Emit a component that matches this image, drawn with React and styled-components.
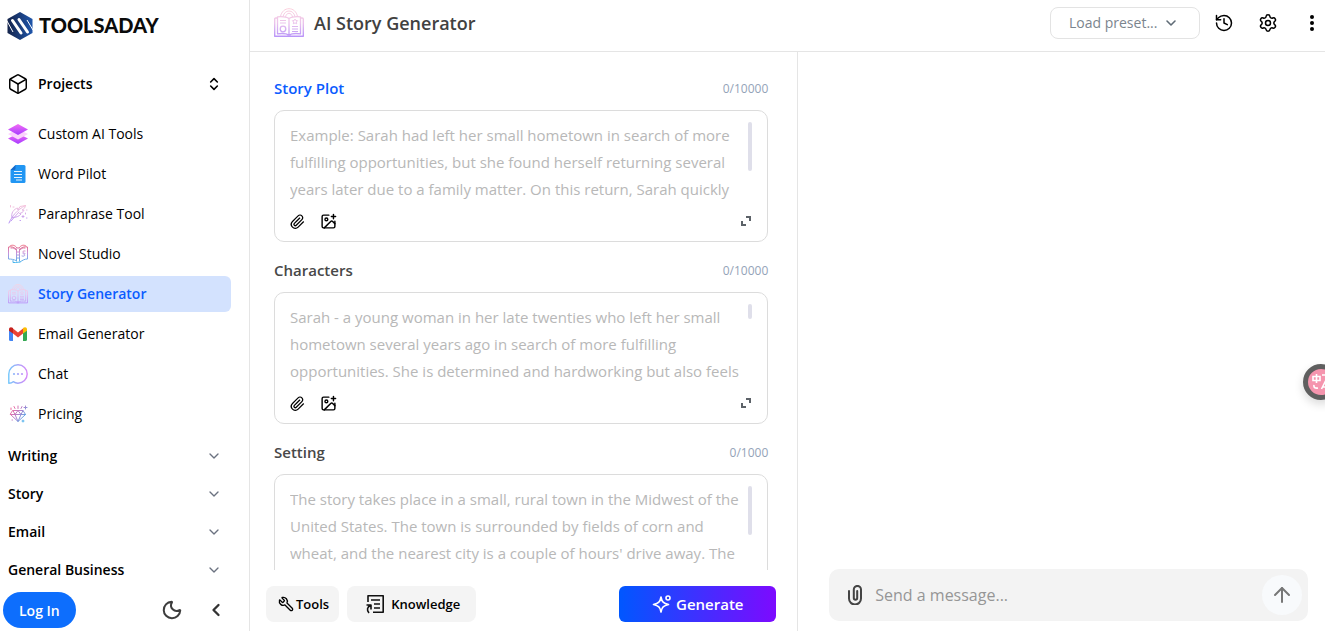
import React, { useState } from "react";
import styled, { createGlobalStyle } from "styled-components";
import {
    Box,
    ChevronsUpDown,
    ChevronDown,
    ChevronLeft,
    History,
    Settings,
    ImagePlus,
    Wrench,
    ArrowUp,
    Moon,
} from "lucide-react";
import { GrAttachment } from "react-icons/gr";

const fields = [
    {
        id: "plot",
        label: "Story Plot",
        max: 10000,
        thumb: 49,
        active: true,
        placeholder:
            "Example: Sarah had left her small hometown in search of more fulfilling opportunities, but she found herself returning several years later due to a family matter. On this return, Sarah quickly",
    },
    {
        id: "characters",
        label: "Characters",
        max: 10000,
        thumb: 15,
        placeholder:
            "Sarah - a young woman in her late twenties who left her small hometown several years ago in search of more fulfilling opportunities. She is determined and hardworking but also feels",
    },
    {
        id: "setting",
        label: "Setting",
        max: 1000,
        thumb: 49,
        placeholder:
            "The story takes place in a small, rural town in the Midwest of the United States. The town is surrounded by fields of corn and wheat, and the nearest city is a couple of hours' drive away. The",
    },
];

const groups = ["Writing", "Story", "Email", "General Business"];

const LogoMark = () => (
    <svg width="26" height="30" viewBox="0 0 26 30" aria-hidden="true">
        <defs>
            <linearGradient id="mark" x1="0" y1="0" x2="1" y2="0">
                <stop offset="0" stopColor="#15244b" />
                <stop offset="1" stopColor="#1f56ab" />
            </linearGradient>
        </defs>
        <path d="M13 1 25.500 8v14L13 29 .5 22V8z" fill="url(#mark)" />
        <g stroke="#fff" strokeWidth="3" strokeLinecap="round" fill="none">
            <path d="M5.500 9.500 14 22" />
            <path d="M12 8.500 20.500 21" />
        </g>
        <path d="M0 10 6 21M20 9l6 10" stroke="#fff" strokeWidth="1" />
    </svg>
);

const LayersIcon = () => (
    <svg width="20" height="20" viewBox="0 0 20 20" aria-hidden="true">
        <defs>
            <linearGradient id="layers" x1="0" y1="0" x2="0" y2="1">
                <stop offset="0" stopColor="#f36cf5" />
                <stop offset="1" stopColor="#a63cff" />
            </linearGradient>
        </defs>
        <path d="M0 14.500 10 9.500l10 5L10 20z" fill="url(#layers)" />
        <path d="M0 10 10 5l10 5-10 5.500z" fill="#fbd3fc" />
        <path d="M0 5.500 10 0l10 5.500L10 11z" fill="url(#layers)" />
    </svg>
);

const DocIcon = () => (
    <svg width="20" height="20" viewBox="0 0 20 20" aria-hidden="true">
        <path d="M7.500 1H16a1.500 1.500 0 0 1 1.500 1.500v15A1.500 1.500 0 0 1 16 19H4a1.500 1.500 0 0 1-1.500-1.500V6z" fill="#2196f3" />
        <path d="M7.500 1v3.500A1.500 1.500 0 0 1 6 6H2.500z" fill="#1769c9" />
        <path d="M6 7.500h8M6 10.500h8M6 13.500h8M8 16h6" stroke="#e3f2fd" strokeWidth="1.200" />
    </svg>
);

const FeatherIcon = () => (
    <svg width="20" height="20" viewBox="0 0 20 20" fill="none" stroke="url(#feather)" strokeLinecap="round" strokeLinejoin="round" aria-hidden="true">
        <defs>
            <linearGradient id="feather" gradientUnits="userSpaceOnUse" x1="0" y1="0" x2="0" y2="20">
                <stop offset="0" stopColor="#fbc8d9" />
                <stop offset="1" stopColor="#b08df6" />
            </linearGradient>
        </defs>
        <path d="M1 19C4 12 9 6 17.500 1.500 17 4 16 5 14 6l2 .3c-1 2-2.500 2.700-4.500 3.200l1.500.5c-2 2.500-5 3.500-8.500 3.500" />
        <path d="M4 14C2.500 9 6 5 9.500 4l.5 2 2-3.500 5.500-1" />
        <path d="M3 17 11 8M15 11.500v2M14 12.500h2M17.500 9v1M2.500 1.500v1.500M5 3h1M18.500 14h.5M12 16.500h.5M18.500 6h.5" />
    </svg>
);

const NovelIcon = () => (
    <svg width="20" height="20" viewBox="0 0 20 20" fill="none" stroke="url(#novel)" strokeLinejoin="round" strokeLinecap="round" aria-hidden="true">
        <defs>
            <linearGradient id="novel" gradientUnits="userSpaceOnUse" x1="0" y1="0" x2="0" y2="20">
                <stop offset="0" stopColor="#f0606f" />
                <stop offset=".45" stopColor="#c792dc" />
                <stop offset="1" stopColor="#35bdf0" />
            </linearGradient>
        </defs>
        <path d="M8 5C6 3 3.500 2.500.5 3v12c3 0 5.500.5 7.500 1.500M12 5c2-2 4.500-2.500 7.500-2v12c-3 0-4.500 1-7.500 3" />
        <path d="M2 2c2-1.500 5-1 7 2h2c2-3 5-3.500 7-2M3 4c2-.5 4 .5 5 2M17 4c-2-.5-4 .5-5 2" />
        <path d="M8.500 5v12M11.500 5v12M8.500 8h3M8.500 11h3M8.500 14h3" />
        <path d="M17 7c-3-.5-3 2 0 2.500M14 12c3 1 4-1.500 1-2.500M5 16.500v2h2.500L12 18" />
    </svg>
);

// shared by the sidebar and the page header, so the gradient id has to differ
const StoryIcon = ({ size, id }) => (
    <svg width={size} height={size} viewBox="0 0 30 30" fill="none" stroke={`url(#${id})`} strokeLinejoin="round" aria-hidden="true">
        <defs>
            <linearGradient id={id} gradientUnits="userSpaceOnUse" x1="0" y1="0" x2="0" y2="30">
                <stop offset="0" stopColor="#fcd0dc" />
                <stop offset=".5" stopColor="#ebc4ec" />
                <stop offset="1" stopColor="#b48ffa" />
            </linearGradient>
        </defs>
        <path d="M6.500 8.500C7.500 3.500 11 .7 15 .7s7.500 2.800 8.500 7.800M9 8.500C10 5 12 3 15 3s5 2 6 5.500M11.500 9c.5-2.300 1.800-3.700 3.500-3.700s3 1.400 3.500 3.700" />
        <path d="M3.500 10H1.700a1 1 0 0 0-1 1v17.300h28.600V11a1 1 0 0 0-1-1h-1.800" strokeWidth="1.400" />
        <path d="M15 10.500C13 8.700 7 8.300 3.500 8.800v17c4-.5 9-.3 11.500 1.200 2.500-1.500 7.500-1.700 11.500-1.200v-17C23 8.300 17 8.700 15 10.500zM15 10.500V27" strokeWidth="1.300" />
        <path d="M6 12.500h6M6 15h6M18 18.500h6M18 21h6M18 23.500h6M13 28.200h4" strokeWidth="1.200" />
        <circle cx="9" cy="21" r="2.800" strokeWidth="1.300" />
        <path d="m21 11 .8 1.500 1.800.2-1.300 1.300.4 1.800-1.700-.9-1.700.9.4-1.800-1.300-1.300 1.800-.2z" />
    </svg>
);

const GmailIcon = () => (
    <svg width="20" height="20" viewBox="0 0 20 20" aria-hidden="true">
        <path d="M1 5v10.500A1.500 1.500 0 0 0 2.500 17H5V8.500z" fill="#4285f4" />
        <path d="M19 5v10.500a1.500 1.500 0 0 1-1.500 1.500H15V8.500z" fill="#34a853" />
        <path d="M5 4.500 10 8.500l5-4v5L10 13.500 5 9.500z" fill="#ea4335" />
        <path d="M1 5.200C1 3 3.300 2.500 5 4v5.500L1 6.700z" fill="#c5221f" />
        <path d="M19 5.200C19 3 16.700 2.500 15 4v5.500l4-2.800z" fill="#fbbc04" />
    </svg>
);

const ChatIcon = () => (
    <svg width="20" height="20" viewBox="0 0 20 20" fill="none" aria-hidden="true">
        <defs>
            <linearGradient id="chat" gradientUnits="userSpaceOnUse" x1="0" y1="0" x2="20" y2="0">
                <stop offset="0" stopColor="#6fc8fb" />
                <stop offset="1" stopColor="#dc84f8" />
            </linearGradient>
        </defs>
        <path d="M.8 19.200V10A9.200 9.200 0 1 1 10 19.200c-2 0-3.500-.6-4.800-1.500-1 1-2.600 1.500-4.400 1.500z" stroke="url(#chat)" strokeWidth="1.400" strokeLinejoin="round" />
        <g fill="url(#chat)">
            <circle cx="6" cy="10" r="1.100" />
            <circle cx="10" cy="10" r="1.100" />
            <circle cx="14" cy="10" r="1.100" />
        </g>
    </svg>
);

const GemIcon = () => (
    <svg width="20" height="20" viewBox="0 0 20 20" fill="none" stroke="url(#gem)" strokeLinejoin="round" strokeLinecap="round" aria-hidden="true">
        <defs>
            <linearGradient id="gem" gradientUnits="userSpaceOnUse" x1="3" y1="5" x2="17" y2="15">
                <stop offset="0" stopColor="#f26a9c" />
                <stop offset=".5" stopColor="#b57fcb" />
                <stop offset="1" stopColor="#4bb4ee" />
            </linearGradient>
        </defs>
        <path d="M5 6.500h10l2.500 4L10 17.500l-7.500-7zM2.500 10.500h15M5 6.500l2 4 3 7 3-7 2-4M7 10.500l3-4 3 4" />
        <path d="M10 2V4.500M6 2.500l1 2M14 2.500l-1 2M3 4v1.500M17.500 2v3M16 3.500h3M15 16v2M14 17h2M4 16h.5" />
    </svg>
);

const ExpandIcon = () => (
    <svg width="12" height="12" viewBox="0 0 12 12" fill="none" stroke="#5c6268" strokeWidth="2" aria-hidden="true">
        <path d="M6 2h4v4M2 6v4h4" />
    </svg>
);

const KnowledgeIcon = () => (
    <svg width="20" height="20" viewBox="0 0 20 20" fill="none" stroke="#111" strokeWidth="1.600" strokeLinejoin="round" aria-hidden="true">
        <path d="M3 8V1.800h15.200v16.400H8" />
        <path d="M6 6h9M9 10h6M9 14h6M1.500 11H6v4.500M6 11c-4 2-4.500 5-2 8" />
    </svg>
);

const ClipIcon = () => (
    <svg width="14" height="20" viewBox="0 0 14 20" fill="none" stroke="#444" strokeWidth="2" strokeLinecap="round" aria-hidden="true">
        <path d="M1 6v7.500a5.800 5.800 0 0 0 12 0V4.500a3.600 3.600 0 0 0-7.200 0V13a1.700 1.700 0 0 0 3.400 0V6" />
    </svg>
);

const SparkIcon = () => (
    <svg width="20" height="20" viewBox="0 0 20 20" fill="none" stroke="#fff" strokeWidth="1.600" strokeLinejoin="round" aria-hidden="true">
        <path d="M9 3c.8 4.700 2.500 6.300 7.500 7.500C11.500 11.700 9.800 13.300 9 18c-.8-4.700-2.500-6.300-7.500-7.500C6.500 9.300 8.200 7.700 9 3z" />
        <circle cx="16" cy="4" r="2" />
    </svg>
);

const TranslateIcon = () => (
    <svg width="20" height="20" viewBox="0 0 20 20" fill="none" stroke="#fff" strokeWidth="1.600" aria-hidden="true">
        <path d="M2 4.500h7v4H2zM5.500 2v9M3 13c-.5 3 1.500 3.500 4 3M11 3h5v5M10.500 17 14 10l3.500 7M12 15h4" />
    </svg>
);

const DotsIcon = () => (
    <svg width="20" height="20" viewBox="0 0 20 20" fill="#000" aria-hidden="true">
        <circle cx="10" cy="4" r="2" />
        <circle cx="10" cy="10" r="2" />
        <circle cx="10" cy="16" r="2" />
    </svg>
);

const links = [
    { name: "Custom AI Tools", icon: <LayersIcon /> },
    { name: "Word Pilot", icon: <DocIcon /> },
    { name: "Paraphrase Tool", icon: <FeatherIcon /> },
    { name: "Novel Studio", icon: <NovelIcon /> },
    { name: "Story Generator", icon: <StoryIcon size={20} id="story-nav" />, active: true },
    { name: "Email Generator", icon: <GmailIcon /> },
    { name: "Chat", icon: <ChatIcon /> },
    { name: "Pricing", icon: <GemIcon /> },
];

function Sidebar() {
    return (
        <Side>
            <Brand href="#home">
                <LogoMark />
                <span>TOOLSADAY</span>
            </Brand>
            <Projects type="button">
                <Box size={22} strokeWidth={1.6} />
                <span>Projects</span>
                <ChevronsUpDown size={16} strokeWidth={2.4} />
            </Projects>
            <Nav>
                {links.map((link) => (
                    <NavLink href="#tool" key={link.name} $active={link.active}>
                        {link.icon}
                        <span>{link.name}</span>
                    </NavLink>
                ))}
            </Nav>
            <Groups>
                {groups.map((group) => (
                    <Group type="button" key={group}>
                        <span>{group}</span>
                        <ChevronDown size={16} color="#6b7280" />
                    </Group>
                ))}
            </Groups>
            <SideFoot>
                <Login type="button">Log In</Login>
                <IconButton type="button" aria-label="Dark mode">
                    <Moon size={22} color="#3d3d3d" strokeWidth={2.2} />
                </IconButton>
                <IconButton type="button" aria-label="Collapse sidebar">
                    <ChevronLeft size={20} color="#333" strokeWidth={2.8} />
                </IconButton>
            </SideFoot>
        </Side>
    );
}

function Field({ field }) {
    const [text, setText] = useState("");

    return (
        <div>
            <FieldHead>
                <Label htmlFor={field.id} $active={field.active}>
                    {field.label}
                </Label>
                <Count>
                    {text.length}/{field.max}
                </Count>
            </FieldHead>
            <FieldBox>
                <AreaRow>
                    <textarea
                        id={field.id}
                        value={text}
                        maxLength={field.max}
                        placeholder={field.placeholder}
                        onChange={(e) => setText(e.target.value)}
                    />
                    <Thumb style={{ height: field.thumb }} />
                </AreaRow>
                <FieldTools>
                    <IconButton type="button" aria-label="Attach file">
                        <GrAttachment size={15} />
                    </IconButton>
                    <IconButton type="button" aria-label="Add image">
                        <ImagePlus size={17} />
                    </IconButton>
                    <IconButton type="button" aria-label="Expand">
                        <ExpandIcon />
                    </IconButton>
                </FieldTools>
            </FieldBox>
        </div>
    );
}

function App() {
    return (
        <Page>
            <GlobalStyle />
            <Sidebar />
            <Main>
                <Header>
                    <StoryIcon size={30} id="story-head" />
                    <h1>AI Story Generator</h1>
                    <Preset>
                        <select aria-label="Load preset" defaultValue="">
                            <option value="">Load preset...</option>
                        </select>
                        <ChevronDown size={16} color="#5f6b76" strokeWidth={2.4} />
                    </Preset>
                    <HeadIcons>
                        <IconButton type="button" aria-label="History">
                            <History size={20} strokeWidth={1.8} />
                        </IconButton>
                        <IconButton type="button" aria-label="Settings">
                            <Settings size={20} strokeWidth={1.8} />
                        </IconButton>
                        <IconButton type="button" aria-label="More">
                            <DotsIcon />
                        </IconButton>
                    </HeadIcons>
                </Header>
                <Columns>
                    <FormColumn>
                        <Fields>
                            {fields.map((field) => (
                                <Field field={field} key={field.id} />
                            ))}
                        </Fields>
                        <Actions>
                            <SoftButton type="button">
                                <ToolIcon size={16} />
                                Tools
                            </SoftButton>
                            <SoftButton type="button" $wide>
                                <KnowledgeIcon />
                                Knowledge
                            </SoftButton>
                            <Generate type="button">
                                <SparkIcon />
                                Generate
                            </Generate>
                        </Actions>
                    </FormColumn>
                    <ChatColumn>
                        <MessageBar>
                            <IconButton type="button" aria-label="Attach">
                                <ClipIcon />
                            </IconButton>
                            <input
                                type="text"
                                aria-label="Message"
                                placeholder="Send a message..."
                            />
                            <Send type="button" aria-label="Send">
                                <ArrowUp size={24} />
                            </Send>
                        </MessageBar>
                    </ChatColumn>
                </Columns>
            </Main>
            <Translate type="button" aria-label="Translate">
                <TranslateIcon />
            </Translate>
        </Page>
    );
}

export default App;

const GlobalStyle = createGlobalStyle`
    * {
        box-sizing: border-box;
    }
    body {
        margin: 0;
        background: #fff;
        overflow: hidden;
    }
    body, button, input, select, textarea {
        font-family: "Open Sans", "Noto Sans", sans-serif;
    }
    button {
        border: none;
        padding: 0;
        background: none;
        color: #000;
        cursor: pointer;
    }
    svg {
        flex-shrink: 0;
    }
`;

const Page = styled.div`
    display: flex;
    height: 100vh;
    position: relative;
    overflow: hidden;
`;

const Side = styled.aside`
    width: 250px;
    flex-shrink: 0;
    display: flex;
    flex-direction: column;
    border-right: 1px solid #e5e5e5;

    span {
        padding-bottom: 2px;
    }
`;

const Brand = styled.a`
    display: flex;
    align-items: center;
    gap: 6px;
    height: 52px;
    padding-left: 7px;
    color: #0b0b0b;
    text-decoration: none;

    span {
        font: 900 20px/28px Lato, sans-serif;
    }
`;

const Projects = styled.button`
    display: flex;
    align-items: center;
    gap: 9px;
    height: 36px;
    margin: 14px 27px 14px 7px;
    font-size: 14px;
    font-weight: 600;

    span {
        flex: 1;
        text-align: left;
    }
`;

const Nav = styled.nav`
    display: flex;
    flex-direction: column;
    gap: 4px;
    margin-right: 18px;
`;

const NavLink = styled.a`
    display: flex;
    align-items: center;
    gap: 10px;
    height: 36px;
    padding-left: 8px;
    border-radius: 0 6px 6px 0;
    font-size: 14px;
    font-weight: ${({ $active }) => ($active ? 600 : 400)};
    color: ${({ $active }) => ($active ? "#0b5cff" : "#000")};
    background: ${({ $active }) => ($active ? "#d3e2fe" : "transparent")};
    text-decoration: none;
`;

const Groups = styled.div`
    flex: 1;
    min-height: 0;
    overflow: hidden;
    padding-top: 5px;
`;

const Group = styled.button`
    display: flex;
    align-items: center;
    justify-content: space-between;
    width: 100%;
    height: 38px;
    padding: 0 27px 0 8px;
    font-size: 14px;
    font-weight: 600;
`;

const SideFoot = styled.div`
    display: flex;
    align-items: center;
    gap: 23px;
    padding: 0 23px 3px 3px;
`;

const Login = styled.button`
    height: 36px;
    padding: 0 16px;
    margin-right: auto;
    border-radius: 18px;
    background: #0d6efd;
    color: #fff;
    font-size: 14px;
    font-weight: 600;
`;

const IconButton = styled.button`
    display: flex;
    align-items: center;
    justify-content: center;
`;

const Main = styled.main`
    flex: 1;
    min-width: 0;
    display: flex;
    flex-direction: column;
`;

const Header = styled.header`
    display: flex;
    align-items: center;
    height: 52px;
    padding: 0 3px 6px 24px;
    border-bottom: 1px solid #e5e5e5;

    h1 {
        flex: 1;
        margin: 0 0 0 10px;
        font-size: 18px;
        font-weight: 600;
        color: #414141;
    }
`;

const Preset = styled.div`
    display: flex;
    align-items: center;
    height: 32px;
    padding: 0 20px 0 18px;
    border: 1px solid #e3e3e3;
    border-radius: 8px;

    select {
        appearance: none;
        width: 94px;
        border: none;
        outline: none;
        padding: 0;
        background: none;
        font-size: 14px;
        color: #7b858e;
    }
`;

const HeadIcons = styled.div`
    display: flex;
    gap: 24px;
    margin-left: 14px;
`;

const Columns = styled.div`
    flex: 1;
    min-height: 0;
    display: flex;
`;

const FormColumn = styled.section`
    width: 51%;
    display: flex;
    flex-direction: column;
    border-right: 1px solid #e5e5e5;
`;

const Fields = styled.div`
    flex: 1;
    min-height: 0;
    overflow: hidden;
    display: flex;
    flex-direction: column;
    gap: 18px;
    padding: 26px 29px 0 24px;
`;

const FieldHead = styled.div`
    display: flex;
    align-items: center;
    justify-content: space-between;
    height: 20px;
    margin-bottom: 12px;
`;

const Label = styled.label`
    font-size: 15px;
    font-weight: 600;
    color: ${({ $active }) => ($active ? "#0b5cff" : "#484848")};
`;

const Count = styled.span`
    font-size: 12px;
    color: #94a3b8;
`;

const FieldBox = styled.div`
    padding: 11px 15px 10px;
    border: 1px solid #dcdcdc;
    border-radius: 10px;
`;

const AreaRow = styled.div`
    display: flex;

    textarea {
        flex: 1;
        min-width: 0;
        height: 81px;
        padding: 0;
        border: none;
        outline: none;
        resize: none;
        overflow: hidden;
        font-size: 15px;
        line-height: 27px;
        color: #333;

        &::placeholder {
            color: #b8b8b8;
        }
    }
`;

const Thumb = styled.span`
    width: 4px;
    margin-left: 5px;
    border-radius: 2px;
    background: #dfdfea;
`;

const FieldTools = styled.div`
    display: flex;
    align-items: center;
    gap: 15px;
    height: 20px;
    margin-top: 8px;

    button:last-child {
        margin-left: auto;
    }
`;

const Actions = styled.div`
    display: flex;
    gap: 8px;
    padding: 16px 21px 9px 16px;
`;

const ToolIcon = styled(Wrench)`
    transform: scaleX(-1);
`;

const SoftButton = styled.button`
    display: flex;
    align-items: center;
    gap: ${({ $wide }) => ($wide ? "6px" : "2px")};
    height: 36px;
    padding: ${({ $wide }) => ($wide ? "0 16px 0 18px" : "0 10px 0 12px")};
    border-radius: 8px;
    background: #f4f4f4;
    font-size: 13px;
    font-weight: 600;
`;

const Generate = styled.button`
    display: flex;
    align-items: center;
    justify-content: center;
    gap: 4px;
    width: 157px;
    height: 36px;
    margin-left: auto;
    border-radius: 6px;
    background: linear-gradient(90deg, #0057ff, #7d0aff);
    color: #fff;
    font-size: 15px;
    font-weight: 600;
`;

const ChatColumn = styled.section`
    flex: 1;
    min-width: 0;
    display: flex;
    flex-direction: column;
    justify-content: flex-end;
    padding: 0 17px 10px 31px;
`;

const MessageBar = styled.div`
    display: flex;
    align-items: center;
    gap: 13px;
    height: 52px;
    padding: 0 6px 0 19px;
    border-radius: 10px;
    background: #f3f3f3;

    input {
        flex: 1;
        min-width: 0;
        border: none;
        outline: none;
        padding: 0;
        background: none;
        font-size: 16px;

        &::placeholder {
            color: #969696;
        }
    }
`;

const Send = styled.button`
    display: flex;
    align-items: center;
    justify-content: center;
    width: 40px;
    height: 40px;
    border-radius: 50%;
    background: #f8fafc;
    color: #777;
`;

const Translate = styled.button`
    position: absolute;
    top: 364px;
    right: -14px;
    display: flex;
    align-items: center;
    justify-content: center;
    width: 36px;
    height: 36px;
    border: 5px solid #5f5f5f;
    border-radius: 50%;
    background: #f595ae;
    box-shadow: 0 4px 10px #00000026;
`;
